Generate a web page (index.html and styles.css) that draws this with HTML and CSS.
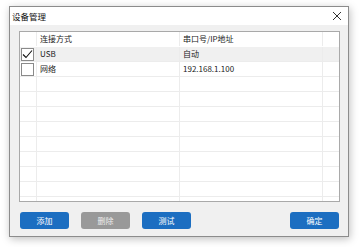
FILE: index.html
```html
<!DOCTYPE html>
<html lang="zh-CN">
<head>
    <meta charset="UTF-8">
    <title>设备管理</title>
    <link rel="stylesheet" href="styles.css">
</head>
<body>
    <div class="dialog">
        <div class="title-bar">
            <span class="title">设备管理</span>
            <span class="close">
                <svg width="10" height="10" viewBox="0 0 10 10"><path d="M1 1 L9 9 M9 1 L1 9" stroke="#333" stroke-width="1" fill="none"/></svg>
            </span>
        </div>
        <div class="dialog-body">
            <div class="grid-box">
                <div class="row head">
                    <div class="cell"></div>
                    <div class="cell">连接方式</div>
                    <div class="cell">串口号/IP地址</div>
                    <div class="cell"></div>
                </div>
                <div class="row selected">
                    <div class="cell check-cell">
                        <span class="checkbox">
                            <svg width="11" height="11" viewBox="0 0 11 11"><path d="M1 5.5 L4 8.5 L10 1.5" stroke="#111" stroke-width="1.1" fill="none"/></svg>
                        </span>
                    </div>
                    <div class="cell">USB</div>
                    <div class="cell">自动</div>
                    <div class="cell"></div>
                </div>
                <div class="row">
                    <div class="cell check-cell"><span class="checkbox"></span></div>
                    <div class="cell">网络</div>
                    <div class="cell">192.168.1.100</div>
                    <div class="cell"></div>
                </div>
                <div class="row"><div class="cell"></div><div class="cell"></div><div class="cell"></div><div class="cell"></div></div>
                <div class="row"><div class="cell"></div><div class="cell"></div><div class="cell"></div><div class="cell"></div></div>
                <div class="row"><div class="cell"></div><div class="cell"></div><div class="cell"></div><div class="cell"></div></div>
                <div class="row"><div class="cell"></div><div class="cell"></div><div class="cell"></div><div class="cell"></div></div>
                <div class="row"><div class="cell"></div><div class="cell"></div><div class="cell"></div><div class="cell"></div></div>
                <div class="row"><div class="cell"></div><div class="cell"></div><div class="cell"></div><div class="cell"></div></div>
                <div class="row"><div class="cell"></div><div class="cell"></div><div class="cell"></div><div class="cell"></div></div>
                <div class="row"><div class="cell"></div><div class="cell"></div><div class="cell"></div><div class="cell"></div></div>
                <div class="row"><div class="cell"></div><div class="cell"></div><div class="cell"></div><div class="cell"></div></div>
            </div>
            <div class="buttons">
                <button class="btn">添加</button>
                <button class="btn disabled">删除</button>
                <button class="btn">测试</button>
                <span class="spacer"></span>
                <button class="btn">确定</button>
            </div>
        </div>
    </div>
</body>
</html>
```

FILE: styles.css
```css
body {
    margin: 0;
    width: 362px;
    height: 247px;
    background-color: #fff;
    font-family: "Noto Sans CJK SC", "Noto Sans", sans-serif;
    font-size: 8px;
    color: #222;
    overflow: hidden;
}
.dialog {
    margin: 6px 0 0 9px;
    width: 340px;
    height: 231px;
    box-sizing: border-box;
    border: 1px solid #8c8c8c;
    background-color: #f0f0f0;
    box-shadow: 1px 2px 8px rgba(0,0,0,0.25);
    display: flex;
    flex-direction: column;
}
.title-bar {
    height: 18px;
    background-color: #fff;
    display: flex;
    align-items: center;
    justify-content: space-between;
    padding: 0 6px 0 2px;
}
.title {
    font-size: 8.5px;
    color: #111;
}
.close {
    display: flex;
    align-items: center;
}
.dialog-body {
    flex: 1;
    padding: 6px 8px 0 9px;
}
.grid-box {
    height: 171px;
    box-sizing: border-box;
    border: 1px solid #a9a9a9;
    background-color: #fff;
    overflow: hidden;
}
.row {
    display: grid;
    grid-template-columns: 17px 143px 143px 1fr;
    height: 15px;
    box-sizing: border-box;
    border-bottom: 1px solid #ececec;
}
.row.head {
    border-bottom-color: #fff;
}
.row.selected {
    background-color: #f0f0f0;
}
.cell {
    border-right: 1px solid #ececec;
    padding-left: 3px;
    line-height: 14px;
    white-space: nowrap;
    overflow: hidden;
}
.cell:last-child {
    border-right: none;
}
.check-cell {
    padding-left: 1px;
    display: flex;
    align-items: center;
}
.checkbox {
    width: 13px;
    height: 13px;
    box-sizing: border-box;
    border: 1px solid #8a8a8a;
    background-color: #fff;
    display: flex;
    align-items: center;
    justify-content: center;
}
.buttons {
    display: flex;
    gap: 12px;
    margin-top: 10px;
    padding-left: 1px;
    padding-right: 1px;
}
.spacer {
    flex: 1;
}
.btn {
    width: 49px;
    height: 17px;
    padding: 0;
    border: none;
    border-radius: 3px;
    background-color: #1c6ec1;
    color: #fff;
    font-family: inherit;
    font-size: 8px;
    line-height: 17px;
}
.btn.disabled {
    background-color: #999;
    color: #eee;
}
```
